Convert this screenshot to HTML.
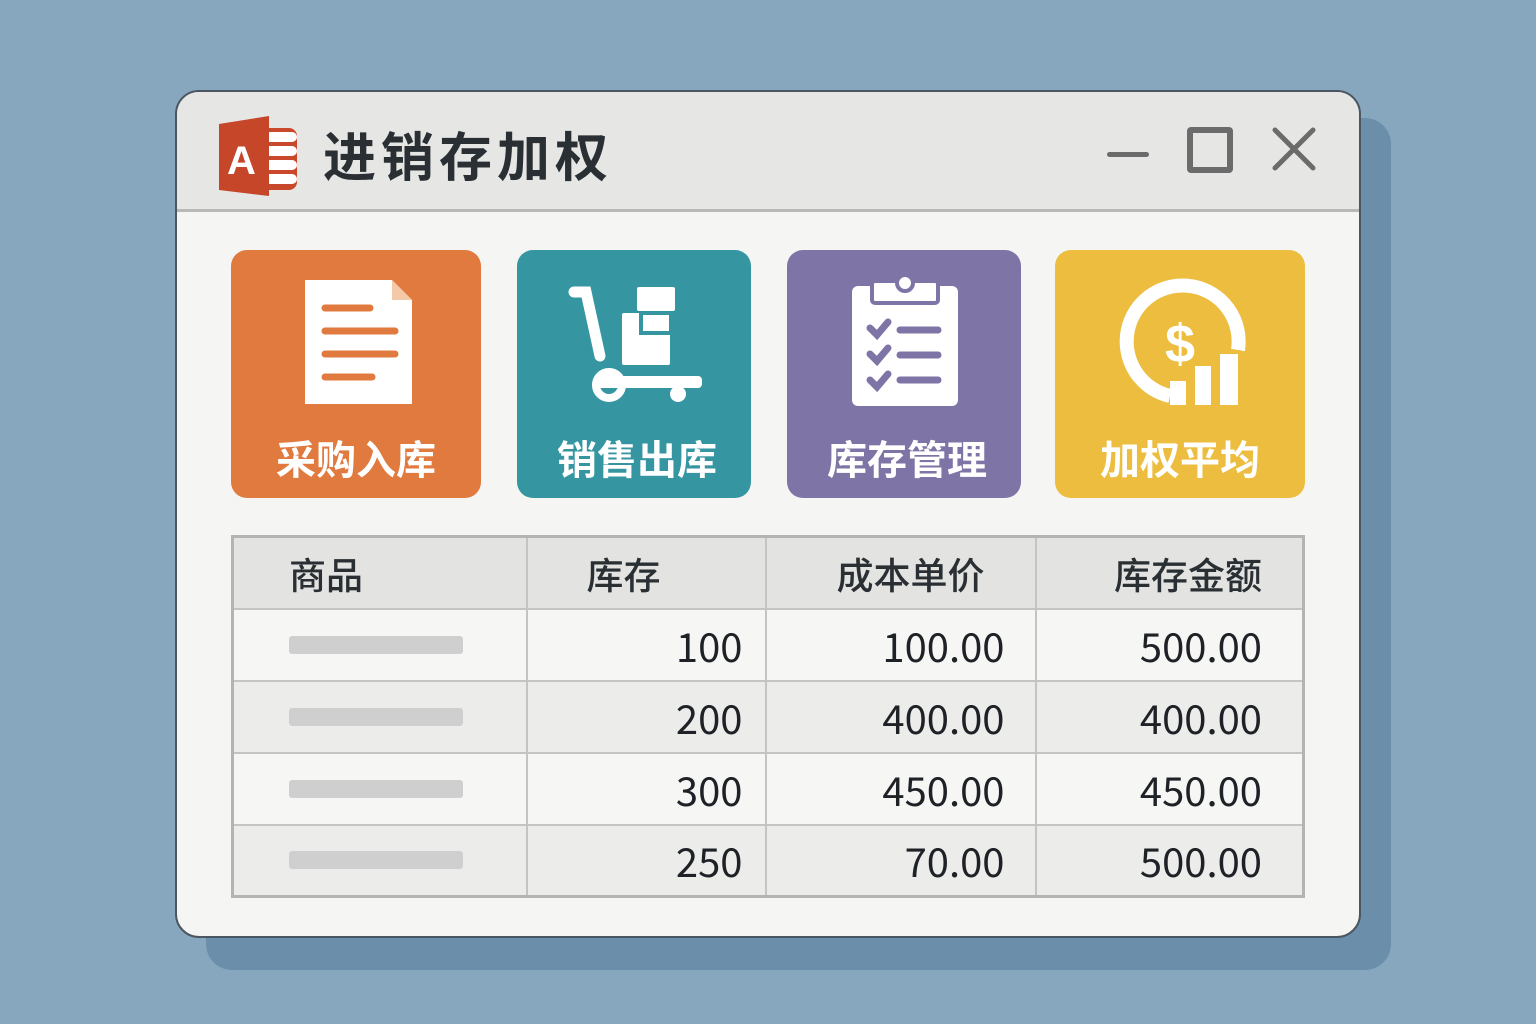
<!DOCTYPE html>
<html><head><meta charset="utf-8"><style>
*{margin:0;padding:0;box-sizing:border-box}
body{width:1536px;height:1024px;background:#87a7bf;position:relative;overflow:hidden;font-family:"Liberation Sans","Noto Sans CJK SC",sans-serif}
.shadow{position:absolute;left:206px;top:118px;width:1185px;height:852px;border-radius:26px;background:#6b8fab}
.win{position:absolute;left:175px;top:90px;width:1186px;height:848px;border-radius:24px;border:2px solid #4b5661;background:#f5f5f3;overflow:hidden}
.title{position:absolute;left:0;top:0;right:0;height:120px;background:#e6e6e5;border-bottom:3px solid #b9b9b9}
.tt{position:absolute;left:146px;top:30px;font-size:53px;font-weight:bold;color:#2a2f33;font-family:"Noto Sans CJK SC",sans-serif;line-height:64px;letter-spacing:5px}
.tile{position:absolute;top:250px;height:248px;border-radius:16px;color:#fff}
.lbl{position:absolute;top:432px;text-align:center;font-size:40px;font-weight:bold;color:#fff;font-family:"Noto Sans CJK SC",sans-serif;line-height:50px}
table{position:absolute;left:231px;top:535px;border-collapse:collapse;border:3px solid #b4b4b4}
td{border:2px solid #c4c4c4;height:72px;font-family:"Noto Sans CJK SC",sans-serif;font-size:40px;color:#1e2226;text-align:right;padding-right:22px}
tr.h td{background:#e3e3e2;font-size:37px;font-weight:500;color:#2a2f33}
tr.a td{background:#f6f6f5}
tr.b td{background:#ececeb}
.bar{display:block;width:174px;height:18px;background:#cfcfcf;border-radius:3px;margin-left:55px}
</style></head><body>
<div class="shadow"></div>
<div class="win">
<div class="title">
<svg style="position:absolute;left:36px;top:22px" width="90" height="84" viewBox="0 0 90 84">
<rect x="44" y="14" width="40" height="62" rx="8" fill="#c9472a"/>
<g fill="#fff"><rect x="50" y="18" width="34" height="10" rx="5"/><rect x="50" y="32" width="34" height="10" rx="5"/><rect x="50" y="46" width="34" height="10" rx="5"/><rect x="50" y="60" width="34" height="10" rx="5"/></g>
<path d="M6 10 L56 2 L56 82 L6 76 Z" fill="#c6462a"/>
<text x="14" y="60" font-size="40" font-weight="bold" fill="#fff" font-family="Liberation Sans">A</text>
</svg>
<div class="tt">进销存加权</div>
<div style="position:absolute;left:930px;top:60px;width:42px;height:5px;background:#6b6b6b;border-radius:3px"></div>
<div style="position:absolute;left:1010px;top:35px;width:46px;height:46px;border:6px solid #6b6b6b;border-radius:4px"></div>
<svg style="position:absolute;left:1095px;top:35px" width="44" height="44"><path d="M3 3L41 41M41 3L3 41" stroke="#6b6b6b" stroke-width="5" stroke-linecap="round"/></svg>
</div>
</div>
<div class="tile" style="left:231px;width:250px;background:#e07a3e"></div>
<div class="tile" style="left:517px;width:234px;background:#3596a2"></div>
<div class="tile" style="left:787px;width:234px;background:#7f74a6"></div>
<div class="tile" style="left:1055px;width:250px;background:#ecbd3e"></div>
<svg style="position:absolute;left:0;top:0" width="1536" height="520">
<g fill="#fff">
<path d="M305 280 H392 L412 300 V404 H305 Z"/>
<path d="M392 280 L412 300 H392Z" fill="#f3c9a8"/>
</g>
<g stroke="#e07a3e" stroke-width="7" stroke-linecap="round"><path d="M325 308H370M325 331H395M325 354H395M325 377H372"/></g>
<g fill="#fff">
<path d="M574 292 L586 292 L600 356" stroke="#fff" stroke-width="11" stroke-linecap="round" fill="none"/>
<rect x="622" y="313" width="48" height="52" rx="2"/>
<rect x="595" y="376" width="107" height="12" rx="4"/>
<circle cx="609" cy="385" r="13" fill="none" stroke="#fff" stroke-width="8"/>
<circle cx="678" cy="394" r="8"/>
<rect x="637" y="287" width="38" height="24" rx="2"/>
</g>
<rect x="641" y="313" width="30" height="20" fill="none" stroke="#3596a2" stroke-width="4"/>
<g fill="#fff">
<rect x="852" y="286" width="106" height="120" rx="6"/>
<rect x="872" y="281" width="66" height="22" rx="3" stroke="#7f74a6" stroke-width="4"/>
<circle cx="905" cy="283" r="8" stroke="#7f74a6" stroke-width="4"/>
</g>
<g stroke="#7f74a6" stroke-width="7" stroke-linecap="round" fill="none"><path d="M870 328L877 335L888 322M870 354L877 361L888 348M870 380L877 387L888 374"/><path d="M900 330H938M900 355H938M900 380H938"/></g>
<path d="M1238 350 A56 56 0 1 0 1170 396" fill="none" stroke="#fff" stroke-width="14"/>
<text x="1180" y="362" text-anchor="middle" font-size="54" font-weight="bold" fill="#fff" font-family="Liberation Sans">$</text>
<g fill="#fff"><rect x="1170" y="381" width="16" height="24"/><rect x="1195" y="366" width="16" height="39"/><rect x="1220" y="354" width="18" height="51"/></g>
</svg>
<div class="lbl" style="left:231px;width:250px">采购入库</div>
<div class="lbl" style="left:517px;width:240px">销售出库</div>
<div class="lbl" style="left:787px;width:240px">库存管理</div>
<div class="lbl" style="left:1055px;width:250px">加权平均</div>
<table>
<tr class="h"><td style="width:294px;text-align:left;padding-left:55px">商品</td><td style="width:239px;padding-right:104px">库存</td><td style="width:270px;padding-right:50px">成本单价</td><td style="width:268px;padding-right:40px">库存金额</td></tr>
<tr class="a"><td><span class="bar"></span></td><td>100</td><td style="padding-right:30px">100.00</td><td style="padding-right:40px">500.00</td></tr>
<tr class="b"><td><span class="bar"></span></td><td>200</td><td style="padding-right:30px">400.00</td><td style="padding-right:40px">400.00</td></tr>
<tr class="a"><td><span class="bar"></span></td><td>300</td><td style="padding-right:30px">450.00</td><td style="padding-right:40px">450.00</td></tr>
<tr class="b"><td><span class="bar"></span></td><td>250</td><td style="padding-right:30px">70.00</td><td style="padding-right:40px">500.00</td></tr>
</table>
</body></html>
